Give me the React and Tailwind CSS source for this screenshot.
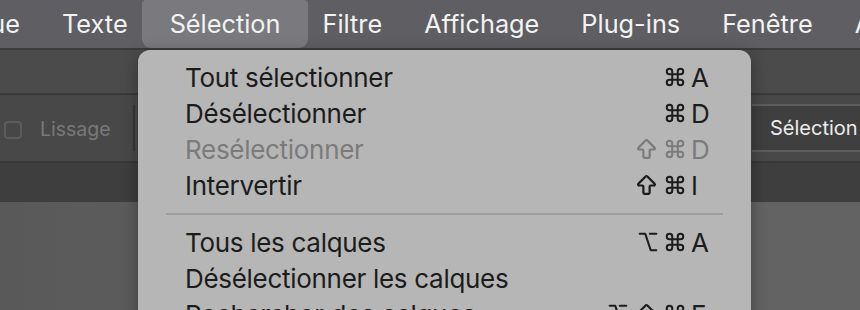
import React from 'react'
import { Command, ArrowBigUp, Option } from 'lucide-react'

const MENUBAR = ['Calque', 'Texte', 'Sélection', 'Filtre', 'Affichage', 'Plug-ins', 'Fenêtre', 'Aide']

const ITEMS = [
  { label: 'Tout sélectionner', keys: ['cmd'], letter: 'A' },
  { label: 'Désélectionner', keys: ['cmd'], letter: 'D' },
  { label: 'Resélectionner', keys: ['shift', 'cmd'], letter: 'D', disabled: true },
  { label: 'Intervertir', keys: ['shift', 'cmd'], letter: 'I' },
  { sep: true },
  { label: 'Tous les calques', keys: ['opt', 'cmd'], letter: 'A' },
  { label: 'Désélectionner les calques', keys: [], letter: '' },
  { label: 'Rechercher des calques', keys: ['opt', 'shift', 'cmd'], letter: 'F' },
]

const Mod = ({ k }) => {
  if (k === 'cmd') return <Command className="w-[22px] h-[22px]" strokeWidth={2.2} />
  if (k === 'shift') return <ArrowBigUp className="w-[25px] h-[25px]" strokeWidth={2.1} />
  return <Option className="w-[22px] h-[22px]" strokeWidth={2.3} />
}

const App = () => {
  return (
    <div
      className="relative w-[860px] h-[310px] overflow-hidden bg-[#4b4b4b]"
      style={{ fontFamily: 'Inter, "Noto Sans", sans-serif' }}
    >
      {/* ── Barre de menus ───────────────────────────── */}
      <div className="h-[50px] bg-[#5f5f63] border-b-2 border-[#3b3b3d] flex items-center gap-[42px] -ml-[64px] text-[25.3px] text-[#f2f2f2] whitespace-nowrap">
        {MENUBAR.map((m) => (
          <span
            key={m}
            className={
              m === 'Sélection'
                ? 'bg-[#7a7a7e] -mx-[28px] px-[28px] h-[48px] flex items-center rounded-b-[9px] rounded-t-[4px]'
                : ''
            }
          >
            {m}
          </span>
        ))}
      </div>

      {/* ── Barre d'outils ───────────────────────────── */}
      <div className="h-[45px] bg-[#4b4b4b] border-b-2 border-[#3a3a3a]" />

      {/* ── Options ──────────────────────────────────── */}
      <div className="h-[68px] bg-[#484848] border-b-2 border-[#383838] flex items-center">
        <div className="w-[18px] h-[18px] ml-[4px] mt-[3px] rounded-[4px] border-2 border-[#5c5c5c] bg-[#474747]" />
        <span className="ml-[18px] mt-[3px] text-[19.5px] text-[#787878]">Lissage</span>
        <div className="ml-[22px] w-[2px] h-[46px] bg-[#383838]" />
        <div className="ml-auto w-[108px] h-[48px] bg-[#3f3f3f] border-y-2 border-[#5d5d5d] flex items-center pl-[18px] text-[20px] text-[#ececec] whitespace-nowrap">
          Sélection
        </div>
      </div>

      {/* ── Bande sombre + plan de travail ───────────── */}
      <div className="h-[39px] bg-[#3e3e3e]" />
      <div className="h-[110px] bg-gradient-to-r from-[#595959] via-[#626262] to-[#636363]" />

      {/* ── Menu déroulant ───────────────────────────── */}
      <div className="absolute left-[138px] top-[50px] w-[613px] h-[300px] bg-[#b6b6b6] rounded-[12px] pt-[9px] shadow-[0_4px_16px_rgba(0,0,0,0.35)] text-[26px] tracking-[-0.3px]">
        {ITEMS.map((it, i) =>
          it.sep ? (
            <div key={i} className="h-[21px] flex items-center px-[28px]">
              <div className="h-[2px] w-full bg-[#9e9e9e]" />
            </div>
          ) : (
            <div
              key={i}
              className={`h-[36px] flex items-center pl-[47px] pr-[38px] ${
                it.disabled ? 'text-[#7b7b7b]' : 'text-[#1c1c1c]'
              }`}
            >
              <span className="flex-1 whitespace-nowrap">{it.label}</span>
              <span className="flex items-center gap-[5px]">
                {it.keys.map((k, j) => (
                  <Mod key={j} k={k} />
                ))}
              </span>
              <span className="w-[22px] ml-[5px]">{it.letter}</span>
            </div>
          )
        )}
      </div>
    </div>
  )
}

export default App
